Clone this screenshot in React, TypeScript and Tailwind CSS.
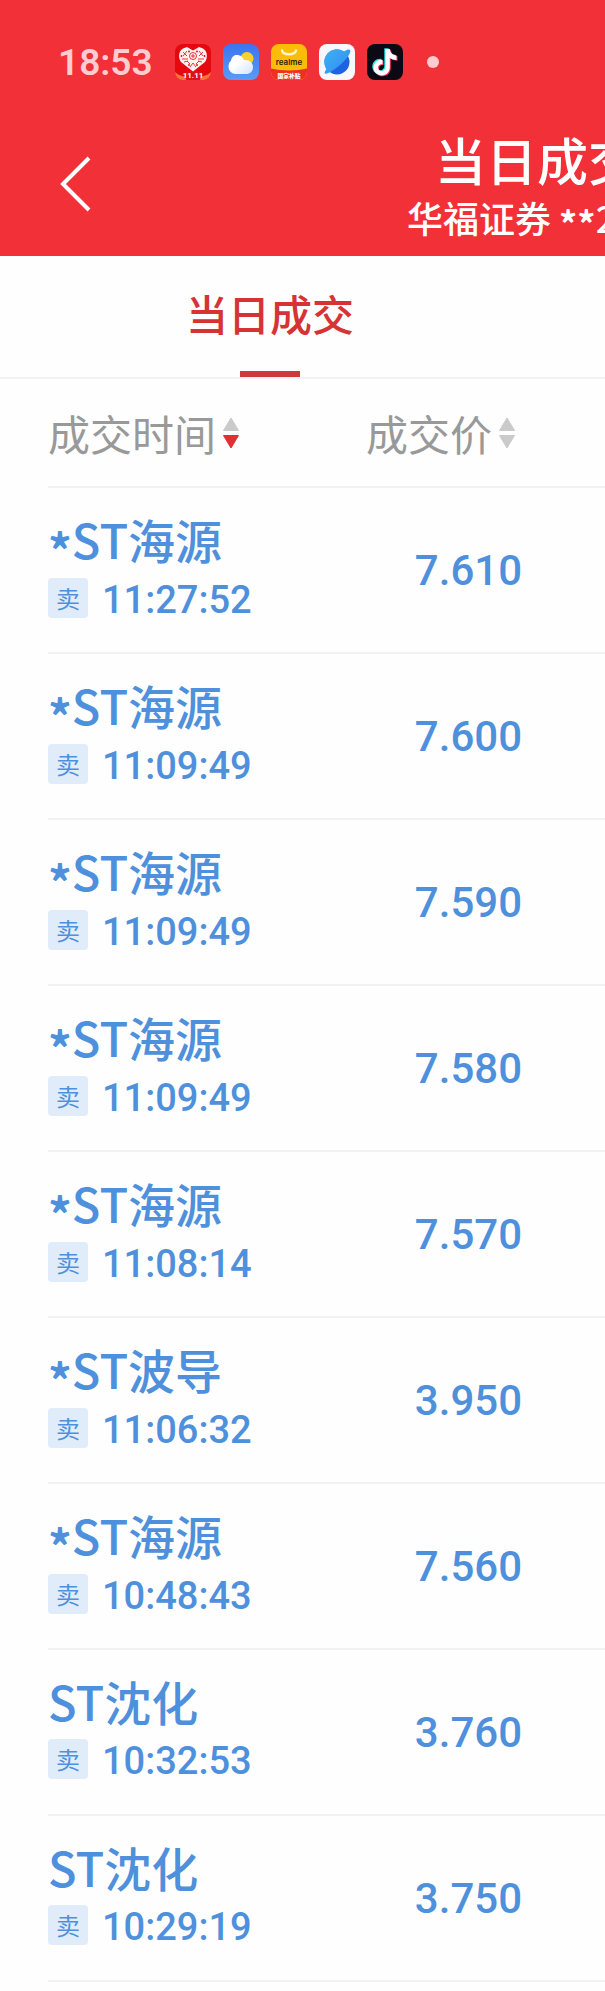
type Trade = { star: boolean; name: string; time: string; price: string };

const trades: Trade[] = [
  { star: true, name: "ST海源", time: "11:27:52", price: "7.610" },
  { star: true, name: "ST海源", time: "11:09:49", price: "7.600" },
  { star: true, name: "ST海源", time: "11:09:49", price: "7.590" },
  { star: true, name: "ST海源", time: "11:09:49", price: "7.580" },
  { star: true, name: "ST海源", time: "11:08:14", price: "7.570" },
  { star: true, name: "ST波导", time: "11:06:32", price: "3.950" },
  { star: true, name: "ST海源", time: "10:48:43", price: "7.560" },
  { star: false, name: "ST沈化", time: "10:32:53", price: "3.760" },
  { star: false, name: "ST沈化", time: "10:29:19", price: "3.750" },
];

function MallIcon() {
  return (
    <svg viewBox="0 0 36 36" className="size-9" aria-hidden="true">
      <rect width="36" height="36" rx="8" fill="#e6070f" />
      <path d="M0 28c4 4 9 5 18 5s14-1 18-5a8 8 0 0 1-8 8H8a8 8 0 0 1-8-8z" fill="#f9743a" />
      <path d="M9.500 29.500 12 27h12l2.500 2.500L25 36H11z" fill="#d9141a" />
      <path d="M18 27.500 6 18C3 14 3.500 7 8 4.500L12 3l6 3.500L24 3l4 1.500c4.500 2.500 5 9.500 2 13.500z" fill="#fff2f0" />
      <g fill="none" stroke="#e6070f" strokeWidth=".8">
        <circle cx="18" cy="12" r="3.500" />
        <path d="M16 12h4M18 10v4M8 8l4 4M12 7l-4 5M24 7l4 5M28 8l-4 4M7 15h6M23 15h6M12 17l3 3M24 17l-3 3M15 23l3-4 3 4M9 18l4-1M27 18l-4-1" />
      </g>
      <g fill="#e6070f">
        <circle cx="6.500" cy="12" r=".9" />
        <circle cx="29.500" cy="12" r=".9" />
        <circle cx="14" cy="7.500" r=".9" />
        <circle cx="22" cy="7.500" r=".9" />
        <circle cx="14" cy="21" r=".9" />
        <circle cx="22" cy="21" r=".9" />
      </g>
      <text x="18" y="34" textAnchor="middle" fontFamily="Roboto, sans-serif" fontSize="8" fontWeight="700" fill="#fff">11.11</text>
    </svg>
  );
}

function WeatherIcon() {
  return (
    <svg viewBox="0 0 36 36" className="size-9" aria-hidden="true">
      <defs>
        <linearGradient id="sky" x1="0" y1="0" x2="0" y2="1">
          <stop offset="0" stopColor="#3c74f0" />
          <stop offset="1" stopColor="#5a9bf6" />
        </linearGradient>
        <linearGradient id="cloud" x1="0" y1="0" x2="1" y2="1">
          <stop offset=".4" stopColor="#ffffff" />
          <stop offset="1" stopColor="#cfe3fb" />
        </linearGradient>
      </defs>
      <rect width="36" height="36" rx="8" fill="url(#sky)" />
      <circle cx="24" cy="14.500" r="6.500" fill="#fcd02f" />
      <path d="M12 30a7 7 0 0 1-6.500-7.500c0-2.500 1-4.500 2.500-5.700C8.500 13 11 11 14 11c3.500 0 6 2.200 6.800 5.200 5-.7 9.200 2.300 9.200 7 0 4-3 6.800-7 6.800z" fill="url(#cloud)" />
    </svg>
  );
}

function StoreIcon() {
  return (
    <svg viewBox="0 0 36 36" className="size-9" aria-hidden="true">
      <defs>
        <clipPath id="store">
          <rect width="36" height="36" rx="8" />
        </clipPath>
      </defs>
      <g clipPath="url(#store)">
        <rect width="36" height="36" fill="#fcbc08" />
        <path d="M0 24.500C10 27 26 27 36 24.500V36H0z" fill="#ee3024" />
      </g>
      <path d="M11 6.500c1 5 13 5 14 0" fill="none" stroke="#fff6cf" strokeWidth="2.400" strokeLinecap="round" />
      <text x="18" y="21" textAnchor="middle" fontFamily="Inter, sans-serif" fontSize="8" fontWeight="600" fill="#2b2108">realme</text>
      <text x="18" y="33.500" textAnchor="middle" fontFamily="'Noto Sans CJK SC', sans-serif" fontSize="5.800" fontWeight="900" fill="#fff">国家补贴</text>
    </svg>
  );
}

function BrowserIcon() {
  return (
    <svg viewBox="0 0 36 36" className="size-9" aria-hidden="true">
      <defs>
        <linearGradient id="planet" x1="0" y1="0" x2="1" y2="1">
          <stop offset="0" stopColor="#3fb0f6" />
          <stop offset="1" stopColor="#2f8cf0" />
        </linearGradient>
      </defs>
      <rect width="36" height="36" rx="8" fill="#f6f8fc" />
      <circle cx="18" cy="18" r="12.500" fill="#1d62e0" />
      <path d="M7.500 25A12.500 12.500 0 0 1 24.800 7.500C28 5.300 30.300 5 31 6c1.500 2-2.500 8.500-9.500 14.500S7.500 31 6 29.500c-.7-.8-.1-2.500 1.500-4.500z" fill="url(#planet)" />
    </svg>
  );
}

function MusicVideoIcon() {
  const note =
    "M18.500 5h4.300c.4 3.700 2.700 6.200 6.700 6.500v4.500c-2.500 0-4.800-.7-6.700-2v9.300c0 4.900-3.700 8.200-8.100 8.200-4.600 0-8.200-3.500-8.200-7.900 0-4.800 4-8.500 9-7.900v4.600c-2.400-.6-4.400 1-4.400 3.200 0 2 1.600 3.500 3.500 3.500 2.100 0 3.900-1.500 3.900-3.900z";
  return (
    <svg viewBox="0 0 36 36" className="size-9" aria-hidden="true">
      <rect width="36" height="36" rx="8" fill="#0b0a14" />
      <path d={note} transform="translate(-1.200 -.8)" fill="#25e8e4" />
      <path d={note} transform="translate(1 .8)" fill="#f4325a" />
      <path d={note} fill="#fff" />
    </svg>
  );
}

function SortArrows({ down }: { down?: boolean }) {
  return (
    <svg viewBox="0 0 16 32" className="h-8 w-4" aria-hidden="true">
      <path d="M8 1 15.500 13.500H.5z" fill="#cacaca" stroke="#cacaca" strokeLinejoin="round" />
      <path d="M8 31 .5 18.500h15z" fill={down ? "#e03030" : "#cacaca"} stroke={down ? "#e03030" : "#cacaca"} strokeLinejoin="round" />
    </svg>
  );
}

export default function App() {
  return (
    <div className="min-h-screen overflow-hidden bg-[#fefefe] font-['Noto_Sans_CJK_SC',sans-serif]">
      <header className="bg-[#f23038] text-white">
        <div className="flex h-[124px] items-center gap-3 pl-[58px]">
          <time className="mr-[10px] font-['Roboto',sans-serif] text-[37px] leading-none font-semibold text-[#ffccd2]">18:53</time>
          <MallIcon />
          <WeatherIcon />
          <StoreIcon />
          <BrowserIcon />
          <MusicVideoIcon />
          <span className="ml-3 size-3 rounded-full bg-[#ffccd2]" />
        </div>
        <div className="flex h-[132px] items-start pl-[58px]">
          <button type="button" aria-label="返回" className="mt-8 shrink-0">
            <svg viewBox="0 0 34 56" className="h-14 w-[34px]" fill="none" stroke="#fff" strokeWidth="4" aria-hidden="true">
              <path d="M31 2 5 28l26 26" />
            </svg>
          </button>
          <div className="ml-auto w-[198px] shrink-0 font-medium whitespace-nowrap">
            <h1 className="pl-7 text-[51px] leading-[70px]">当日成交</h1>
            <p className="text-[36px] leading-[46px]">
              华福证券 <span className="align-[-5px] leading-none font-bold">**</span>2
            </p>
          </div>
        </div>
      </header>

      <nav className="flex h-[123px] border-b-2 border-[#f2f2f2] pl-[186px]">
        <a href="#today" aria-current="page" className="flex flex-col items-center justify-between text-[42px] font-medium text-[#d63434]">
          <span className="pt-[27px] leading-[60px]">当日成交</span>
          <span className="h-1.5 w-[60px] bg-[#d0383a]" />
        </a>
      </nav>

      <main className="pl-12">
        <table className="w-full border-collapse">
          <thead>
            <tr className="h-[108px] border-b-2 border-[#f2f2f2] text-[42px] text-[#999999]">
              <th scope="col" aria-sort="descending" className="p-0 text-left font-normal">
                <button type="button" className="flex items-center gap-[7px] leading-[60px] whitespace-nowrap">
                  成交时间
                  <SortArrows down />
                </button>
              </th>
              <th scope="col" className="p-0 pr-[90px] font-normal">
                <button type="button" className="ml-auto flex items-center gap-[7px] leading-[60px] whitespace-nowrap">
                  成交价
                  <SortArrows />
                </button>
              </th>
            </tr>
          </thead>
          <tbody>
            {trades.map((t, i) => (
              <tr key={i} className="h-[166px] border-b-2 border-[#f2f2f2] text-[#4f90dc]">
                <td className="p-0 pb-4">
                  <div className="text-[47px] leading-[64px] font-medium whitespace-nowrap">
                    {t.star && <span className="align-[-10px] leading-none font-bold">*</span>}
                    {t.name}
                  </div>
                  <div className="mt-1.5 flex items-center gap-[14px]">
                    <span className="flex size-10 items-center justify-center rounded bg-[#e0ecfa] text-[24px] leading-none">卖</span>
                    <time className="pt-1 font-['Roboto',sans-serif] text-[38px] leading-9 font-medium">{t.time}</time>
                  </div>
                </td>
                <td className="p-0 pr-[83px] text-right font-['Roboto',sans-serif] text-[42px] font-medium">{t.price}</td>
              </tr>
            ))}
          </tbody>
        </table>
      </main>
    </div>
  );
}
